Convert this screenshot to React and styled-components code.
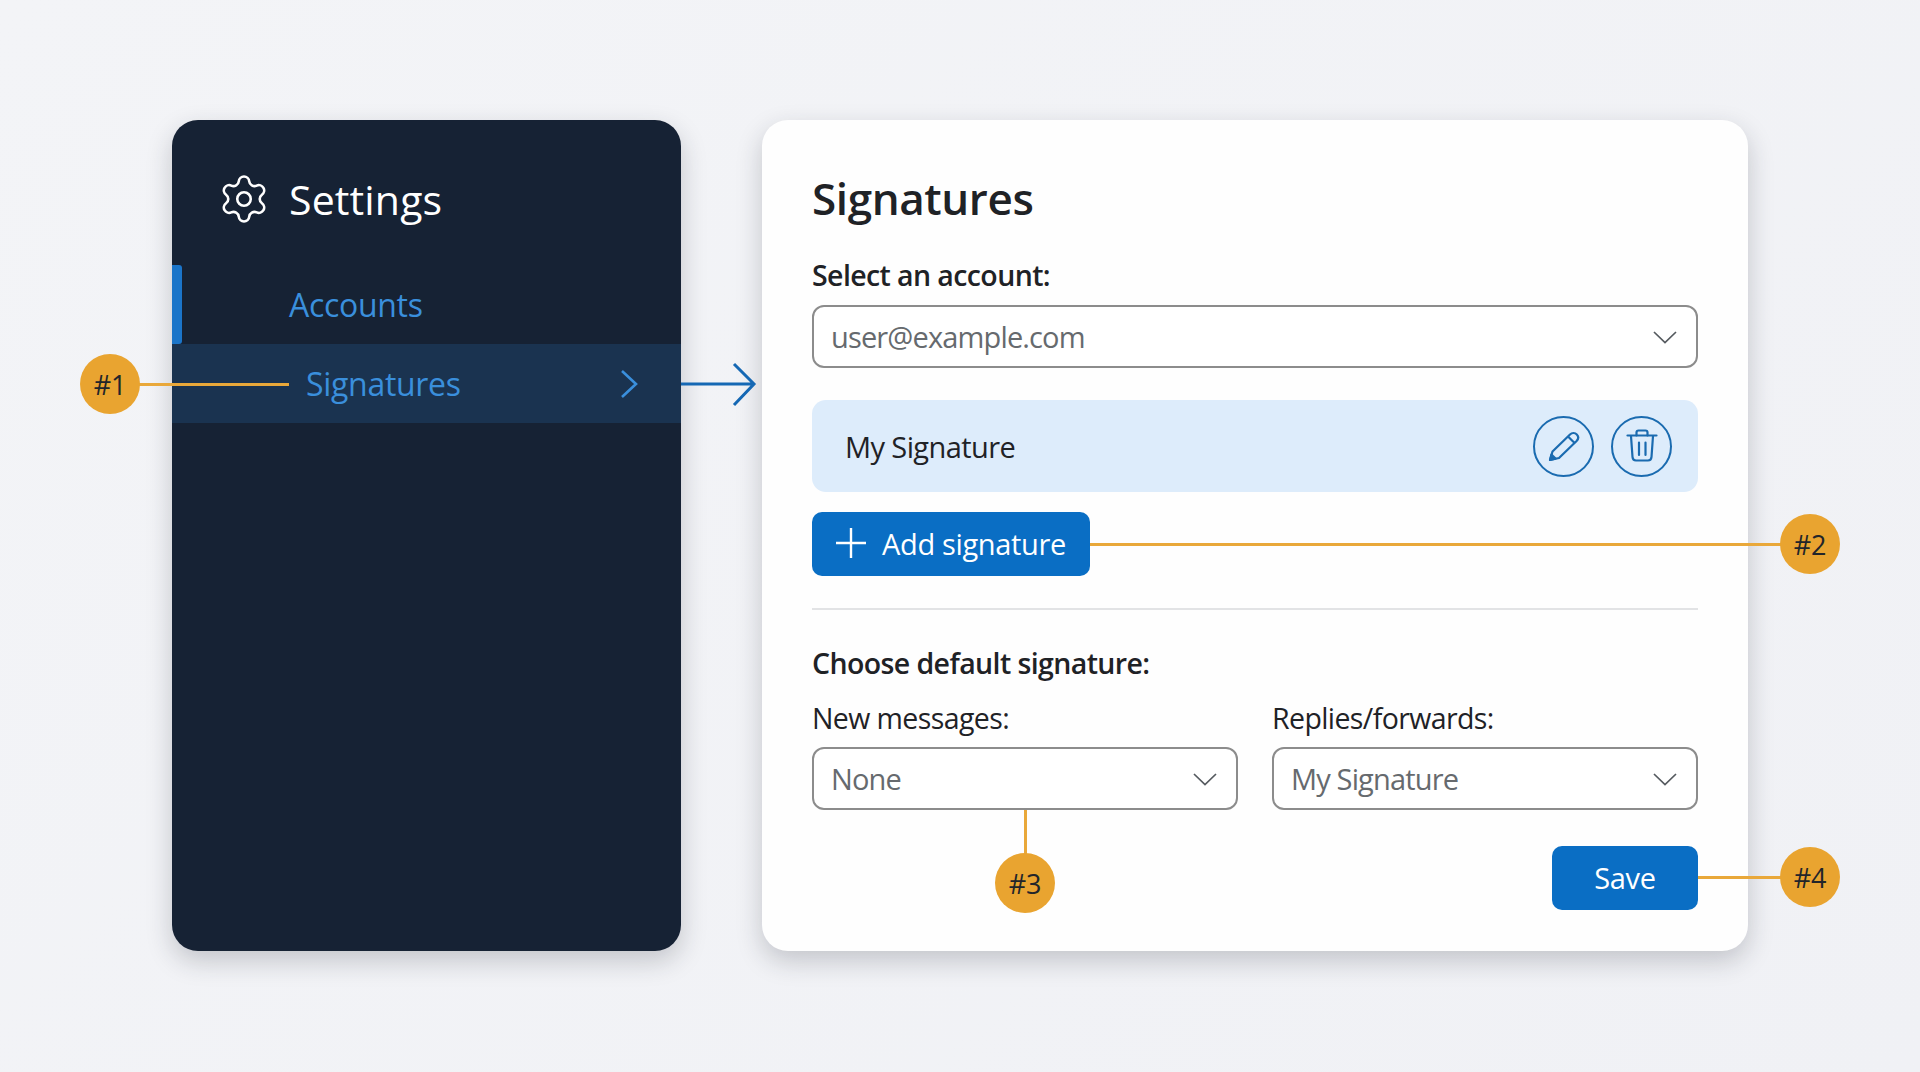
import styled, { createGlobalStyle } from 'styled-components';
import { Settings } from 'lucide-react';

const GlobalStyle = createGlobalStyle`
  html, body {
    margin: 0;
    padding: 0;
    background: #f2f3f6;
  }
  * {
    box-sizing: border-box;
  }
`;

const Stage = styled.div`
  position: relative;
  width: 1920px;
  height: 1072px;
  padding: 120px 172px 121px;
  display: flex;
  gap: 81px;
  overflow: hidden;
  background: linear-gradient(135deg, #f3f4f7 0%, #f0f1f5 100%);
  font-family: 'Open Sans', 'Noto Sans', sans-serif;
`;

const Sidebar = styled.aside`
  width: 509px;
  flex-shrink: 0;
  background: #162234;
  border-radius: 26px;
  overflow: hidden;
  box-shadow: 0 10px 26px rgba(30, 35, 50, 0.22);
`;

const SidebarHeader = styled.div`
  height: 145px;
  padding: 54px 0 0 45px;
  display: flex;
  align-items: flex-start;
  gap: 18px;
  color: #ffffff;
  svg {
    margin-top: -2px;
  }
`;

const SidebarTitle = styled.div`
  font-size: 41px;
  line-height: 50px;
  letter-spacing: 0.15px;
  font-weight: 500;
`;

const NavRow = styled.div`
  height: 79px;
  display: flex;
  align-items: center;
  background: ${(p) => (p.$active ? '#1a3350' : 'transparent')};
  color: #3a8fdc;
`;

const AccentBar = styled.div`
  width: 10px;
  height: 100%;
  background: ${(p) => (p.$show ? '#1b75c9' : 'transparent')};
  border-radius: 0 3px 3px 0;
`;

const NavLabel = styled.div`
  margin-left: ${(p) => p.$indent}px;
  font-size: 32px;
  letter-spacing: -0.3px;
  font-weight: 500;
`;

const NavChevron = styled.svg`
  margin-left: auto;
  margin-right: 42px;
`;

const Panel = styled.main`
  flex: 1;
  background: #fefefe;
  border-radius: 26px;
  padding: 54px 50px 0;
  display: flex;
  flex-direction: column;
  box-shadow: 0 10px 26px rgba(30, 35, 50, 0.22);
`;

const PanelTitle = styled.h1`
  margin: 0;
  font-size: 44px;
  line-height: 48px;
  letter-spacing: -0.4px;
  font-weight: 600;
  color: #1f2226;
`;

const SectionLabel = styled.div`
  margin-top: ${(p) => p.$top}px;
  font-size: 28.5px;
  line-height: 34px;
  letter-spacing: -0.6px;
  font-weight: 600;
  color: #1f2226;
`;

const FieldLabel = styled.div`
  font-size: 28.5px;
  line-height: 34px;
  letter-spacing: -0.6px;
  color: #1f2226;
`;

const Select = styled.div`
  height: 63px;
  margin-top: ${(p) => p.$top}px;
  padding: 0 18px 0 17px;
  display: flex;
  align-items: center;
  justify-content: space-between;
  background: #ffffff;
  border: 2px solid #8c8c8c;
  border-radius: 12px;
  font-size: 29px;
  letter-spacing: -0.85px;
  color: #666a6e;
`;

const SignatureRow = styled.div`
  height: 92px;
  margin-top: 32px;
  padding: 0 25px 0 33px;
  display: flex;
  align-items: center;
  justify-content: space-between;
  background: #ddecfb;
  border-radius: 14px;
  font-size: 29px;
  letter-spacing: -0.6px;
  color: #1f2226;
`;

const RoundActions = styled.div`
  display: flex;
  gap: 17px;
  margin-right: 1px;
`;

const RoundButton = styled.button`
  width: 61px;
  height: 61px;
  padding: 0;
  display: flex;
  align-items: center;
  justify-content: center;
  background: transparent;
  border: 2.5px solid #1a6bb0;
  border-radius: 50%;
`;

const PrimaryButton = styled.button`
  height: ${(p) => p.$height}px;
  width: ${(p) => p.$width}px;
  padding: 0 0 2px;
  display: flex;
  align-items: center;
  justify-content: center;
  gap: 16px;
  background: #0a6ec4;
  border: none;
  border-radius: 10px;
  font-family: inherit;
  font-size: 29px;
  letter-spacing: -0.35px;
  font-weight: 500;
  color: #ffffff;
`;

const AddRow = styled.div`
  margin-top: 20px;
`;

const Divider = styled.hr`
  width: 100%;
  height: 2px;
  margin: 32px 0 0;
  border: none;
  background: #e2e3e5;
`;

const DefaultsGrid = styled.div`
  margin-top: 21px;
  display: grid;
  grid-template-columns: 1fr 1fr;
  gap: 34px;
`;

const SaveRow = styled.div`
  margin-top: 36px;
  display: flex;
  justify-content: flex-end;
`;

const Badge = styled.div`
  position: absolute;
  left: ${(p) => p.$x - 30}px;
  top: ${(p) => p.$y - 30}px;
  width: 60px;
  height: 60px;
  display: flex;
  align-items: center;
  justify-content: center;
  background: #e9a430;
  border-radius: 50%;
  font-size: 27px;
  letter-spacing: -0.3px;
  color: #22252a;
`;

const LeaderH = styled.div`
  position: absolute;
  left: ${(p) => p.$from}px;
  top: ${(p) => p.$y - 1}px;
  width: ${(p) => p.$to - p.$from}px;
  height: 3px;
  background: #e9a83a;
`;

const LeaderV = styled.div`
  position: absolute;
  left: ${(p) => p.$x - 1}px;
  top: ${(p) => p.$from}px;
  width: 3px;
  height: ${(p) => p.$to - p.$from}px;
  background: #e9a83a;
`;

const FlowArrow = styled.svg`
  position: absolute;
  left: 681px;
  top: 362px;
`;

const Chevron = () => (
  <svg width="26" height="14" viewBox="0 0 26 14" fill="none">
    <path d="M2 2 L13 12.5 L24 2" stroke="#555a5f" strokeWidth="1.7" />
  </svg>
);

const PencilIcon = () => (
  <svg width="32" height="32" viewBox="0 0 32 32" fill="none" stroke="#1a6bb0" strokeWidth="2.2" strokeLinejoin="round">
    <path d="M2 30 L4.5 21.5 L22 4.5 C24 2.5 27 2.5 28.8 4.4 C30.6 6.3 30.5 9 28.6 11 L11 28 Z" />
    <path d="M20 6.5 L26.6 13" />
    <path d="M2 30 L3.4 24.6 L7.6 28.6 Z" fill="#1a6bb0" />
  </svg>
);

const TrashIcon = () => (
  <svg width="32" height="34" viewBox="0 0 32 34" fill="none" stroke="#1a6bb0" strokeWidth="2.2" strokeLinejoin="round" strokeLinecap="round">
    <path d="M1.5 6.5 H30.5" />
    <path d="M10.5 6.5 V3.5 C10.5 2.2 11.4 1.5 12.5 1.5 H19.5 C20.6 1.5 21.5 2.2 21.5 3.5 V6.5" />
    <path d="M5 7 L6.5 28 C6.7 30.4 8 31.5 10 31.5 H22 C24 31.5 25.3 30.4 25.5 28 L27 7" />
    <path d="M13 13.5 V26 M19.5 13.5 V26" />
  </svg>
);

const PlusIcon = () => (
  <svg width="30" height="30" viewBox="0 0 30 30" fill="none" stroke="#ffffff" strokeWidth="2.4">
    <path d="M15 0 V30 M0 15 H30" />
  </svg>
);

function App() {
  return (
    <Stage>
      <GlobalStyle />

      <Sidebar>
        <SidebarHeader>
          <Settings size={54} strokeWidth={1.15} />
          <SidebarTitle>Settings</SidebarTitle>
        </SidebarHeader>
        <NavRow>
          <AccentBar $show />
          <NavLabel $indent={107}>Accounts</NavLabel>
        </NavRow>
        <NavRow $active>
          <AccentBar />
          <NavLabel $indent={124}>Signatures</NavLabel>
          <NavChevron width="20" height="30" viewBox="0 0 20 30" fill="none">
            <path d="M3 2 L17 15 L3 28" stroke="#3a8fdc" strokeWidth="2.6" />
          </NavChevron>
        </NavRow>
      </Sidebar>

      <Panel>
        <PanelTitle>Signatures</PanelTitle>
        <SectionLabel $top={36}>Select an account:</SectionLabel>
        <Select $top={13}>
          user@example.com
          <Chevron />
        </Select>

        <SignatureRow>
          My Signature
          <RoundActions>
            <RoundButton>
              <PencilIcon />
            </RoundButton>
            <RoundButton>
              <TrashIcon />
            </RoundButton>
          </RoundActions>
        </SignatureRow>

        <AddRow>
          <PrimaryButton $width={278} $height={64}>
            <PlusIcon />
            Add signature
          </PrimaryButton>
        </AddRow>

        <Divider />

        <SectionLabel $top={36}>Choose default signature:</SectionLabel>

        <DefaultsGrid>
          <div>
            <FieldLabel>New messages:</FieldLabel>
            <Select $top={12}>
              None
              <Chevron />
            </Select>
          </div>
          <div>
            <FieldLabel>Replies/forwards:</FieldLabel>
            <Select $top={12}>
              My Signature
              <Chevron />
            </Select>
          </div>
        </DefaultsGrid>

        <SaveRow>
          <PrimaryButton $width={146} $height={64}>
            Save
          </PrimaryButton>
        </SaveRow>
      </Panel>

      <LeaderH $from={139} $to={289} $y={384} />
      <Badge $x={110} $y={384}>#1</Badge>

      <FlowArrow width="78" height="46" viewBox="0 0 78 46" fill="none">
        <path d="M0 22 H72 M53 2 L73 22 L53 43" stroke="#1568b4" strokeWidth="3" />
      </FlowArrow>

      <LeaderH $from={1090} $to={1781} $y={544} />
      <Badge $x={1810} $y={544}>#2</Badge>

      <LeaderV $x={1025} $from={810} $to={856} />
      <Badge $x={1025} $y={883}>#3</Badge>

      <LeaderH $from={1698} $to={1781} $y={877} />
      <Badge $x={1810} $y={877}>#4</Badge>
    </Stage>
  );
}

export default App;
